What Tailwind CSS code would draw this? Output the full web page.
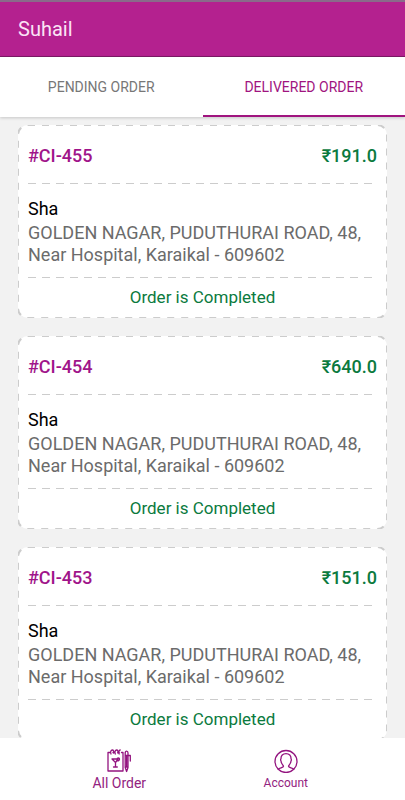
<!DOCTYPE html>
<html lang="en">
<head>
<meta charset="utf-8">
<meta name="viewport" content="width=device-width, initial-scale=1">
<title>Delivered orders</title>
<script src="https://cdn.jsdelivr.net/npm/@tailwindcss/browser@4"></script>
</head>
<body class="flex h-screen flex-col bg-[#f2f2f2] font-[Roboto,'Liberation_Sans',sans-serif]">
  <header class="flex h-[57px] shrink-0 items-center border-t-2 border-b border-t-[#8a6a8a] border-b-[#7d1a66] bg-[#b4218f] px-[18px]">
    <h1 class="text-xl text-[#fbe3f6]">Suhail</h1>
  </header>

  <nav class="z-10 grid h-[60px] shrink-0 grid-cols-2 bg-white text-sm shadow-[0_1px_3px_rgba(0,0,0,0.18)]" aria-label="Order status">
    <a href="#pending" class="flex items-center justify-center border-b-2 border-transparent pt-[2px] text-[#777777]">PENDING ORDER</a>
    <a href="#delivered" aria-current="page" class="flex items-center justify-center border-b-2 border-[#a0147f] pt-[2px] text-[#a0147f]">DELIVERED ORDER</a>
  </nav>

  <main class="flex min-h-0 flex-1 flex-col gap-[18px] overflow-y-auto px-[18px] pt-2 [scrollbar-width:none]">
    <article class="relative shrink-0 rounded-[10px] bg-white px-[10px]">
      <svg class="pointer-events-none absolute inset-0 h-full w-full" aria-hidden="true"><rect width="100%" height="100%" rx="10" fill="none" stroke="#cccccc" stroke-width="2" stroke-dasharray="7 7"/></svg>
      <div class="flex h-[58px] items-center justify-between pt-1 text-lg font-medium">
        <h2 class="text-[#a0148a]">#CI-455</h2>
        <p class="text-[#0b7a3e]">₹191.0</p>
      </div>
      <div class="h-px bg-[repeating-linear-gradient(90deg,#cccccc_0_8px,transparent_8px_14px)]"></div>
      <div class="pt-3 pb-[11px] text-lg">
        <p class="leading-[26px] text-black">Sha</p>
        <p class="leading-[22px] text-[#6b6b6b]">GOLDEN NAGAR, PUDUTHURAI ROAD, 48, Near Hospital, Karaikal - 609602</p>
      </div>
      <div class="h-px bg-[repeating-linear-gradient(90deg,#cccccc_0_8px,transparent_8px_14px)]"></div>
      <p class="flex h-10 items-center justify-center text-[17px] text-[#0b7a3e]">Order is Completed</p>
    </article>

    <article class="relative shrink-0 rounded-[10px] bg-white px-[10px]">
      <svg class="pointer-events-none absolute inset-0 h-full w-full" aria-hidden="true"><rect width="100%" height="100%" rx="10" fill="none" stroke="#cccccc" stroke-width="2" stroke-dasharray="7 7"/></svg>
      <div class="flex h-[58px] items-center justify-between pt-1 text-lg font-medium">
        <h2 class="text-[#a0148a]">#CI-454</h2>
        <p class="text-[#0b7a3e]">₹640.0</p>
      </div>
      <div class="h-px bg-[repeating-linear-gradient(90deg,#cccccc_0_8px,transparent_8px_14px)]"></div>
      <div class="pt-3 pb-[11px] text-lg">
        <p class="leading-[26px] text-black">Sha</p>
        <p class="leading-[22px] text-[#6b6b6b]">GOLDEN NAGAR, PUDUTHURAI ROAD, 48, Near Hospital, Karaikal - 609602</p>
      </div>
      <div class="h-px bg-[repeating-linear-gradient(90deg,#cccccc_0_8px,transparent_8px_14px)]"></div>
      <p class="flex h-10 items-center justify-center text-[17px] text-[#0b7a3e]">Order is Completed</p>
    </article>

    <article class="relative shrink-0 rounded-[10px] bg-white px-[10px]">
      <svg class="pointer-events-none absolute inset-0 h-full w-full" aria-hidden="true"><rect width="100%" height="100%" rx="10" fill="none" stroke="#cccccc" stroke-width="2" stroke-dasharray="7 7"/></svg>
      <div class="flex h-[58px] items-center justify-between pt-1 text-lg font-medium">
        <h2 class="text-[#a0148a]">#CI-453</h2>
        <p class="text-[#0b7a3e]">₹151.0</p>
      </div>
      <div class="h-px bg-[repeating-linear-gradient(90deg,#cccccc_0_8px,transparent_8px_14px)]"></div>
      <div class="pt-3 pb-[11px] text-lg">
        <p class="leading-[26px] text-black">Sha</p>
        <p class="leading-[22px] text-[#6b6b6b]">GOLDEN NAGAR, PUDUTHURAI ROAD, 48, Near Hospital, Karaikal - 609602</p>
      </div>
      <div class="h-px bg-[repeating-linear-gradient(90deg,#cccccc_0_8px,transparent_8px_14px)]"></div>
      <p class="flex h-10 items-center justify-center text-[17px] text-[#0b7a3e]">Order is Completed</p>
    </article>
  </main>

  <nav class="z-10 grid h-[62px] shrink-0 grid-cols-2 bg-white px-9 pt-[11px] text-[#93237f]" aria-label="Main">
    <a href="#orders" class="flex flex-col items-center text-sm">
      <svg class="h-6 w-6" viewBox="0 0 24 24" fill="none" stroke="#93147f" stroke-width="1.3" stroke-linejoin="round" stroke-linecap="round" aria-hidden="true">
        <path d="M3 3.500H1V22H16V3.500H14.500M6 3.500H7.500M11 3.500H12"/>
        <path d="M4 5C3 3 4 1 5.300 1S7 2.500 6.500 4M8.300 5C7.300 3 8.300 1 9.600 1S11.300 2.500 10.800 4M12.200 5C11.400 3 12 1 13.200 1"/>
        <path d="M5 10H11L8.500 13.500V18M5 10L8.500 13.500M6.500 18H10.300M10 10C10.200 8.500 12.500 8.500 12.500 10.100S11 12 10.400 11.700"/>
        <path d="M18.200 4C18.200 1.500 21 1.500 21 4V18.500L19.600 22.500L18.200 18.500ZM18.200 6.500H23.300V12M18.200 18H21M19.600 6.500V17.500"/>
      </svg>
      <span>All Order</span>
    </a>
    <a href="#account" class="flex flex-col items-center text-xs leading-5">
      <svg class="h-6 w-6" viewBox="0 0 24 24" fill="none" stroke="#93147f" stroke-width="1.3" stroke-linejoin="round" stroke-linecap="round" aria-hidden="true">
        <circle cx="12" cy="12.500" r="11"/>
        <path d="M4.300 20.200C5.500 18.800 9.500 18.700 9.500 17.300C9.500 16 7.200 15.200 7 12C6.500 11.500 6.500 10.200 7 9.800C6.800 6.500 8.800 4.700 12 4.700S17.200 6.500 17 9.800C17.500 10.200 17.500 11.500 17 12C16.800 15.200 14.500 16 14.500 17.300C14.500 18.700 18.500 18.800 19.700 20.200"/>
      </svg>
      <span>Account</span>
    </a>
  </nav>
</body>
</html>
